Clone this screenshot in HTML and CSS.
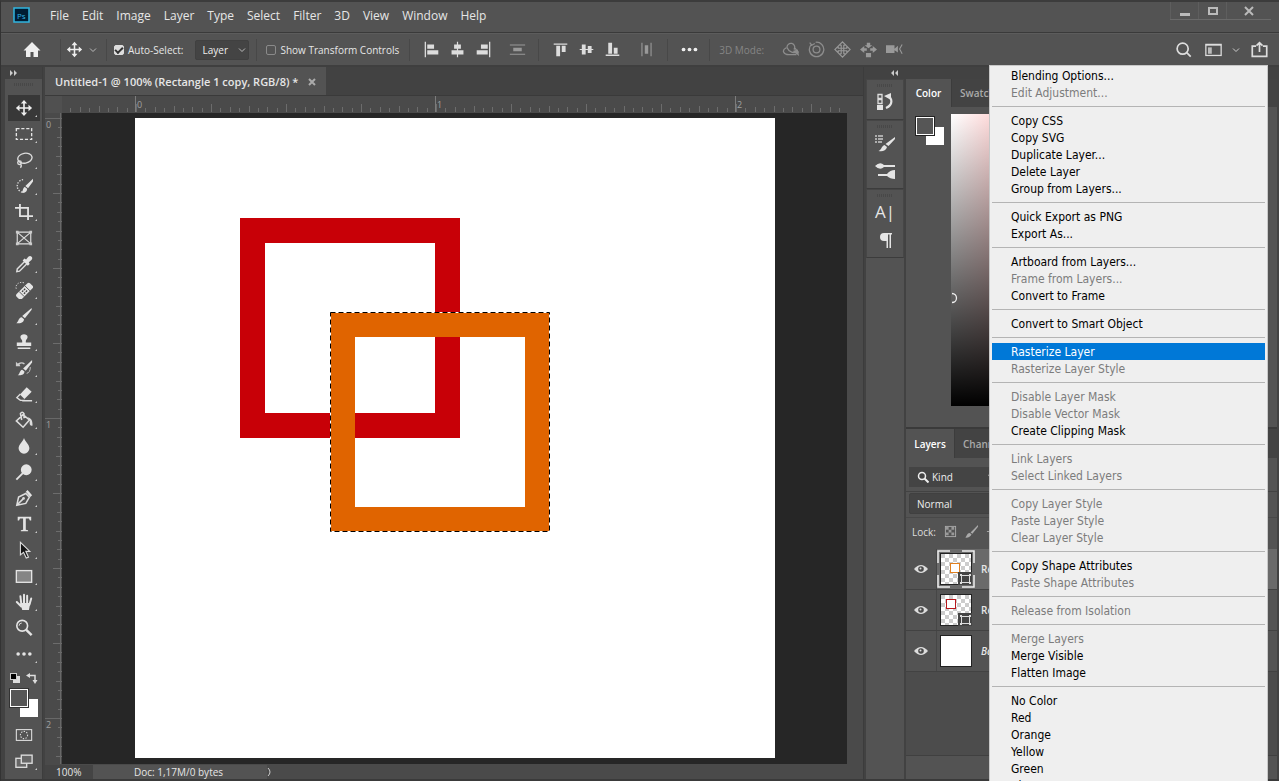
FILE: index.html
```html
<!DOCTYPE html>
<html lang="en">
<head>
<meta charset="utf-8">
<title>Untitled-1 @ 100%</title>
<link rel="stylesheet" href="styles.css">
</head>
<body>
<div class="app">
  <header class="menubar">
    <svg class="logo" viewBox="0 0 17 16"><rect x="1" y="1" width="15" height="14" fill="#001d33" stroke="#31b5e0" stroke-width="1.5"/><text x="4" y="12" class="logo-text">Ps</text></svg>
    <nav class="menus">
      <button>File</button><button>Edit</button><button>Image</button><button>Layer</button><button>Type</button><button>Select</button><button>Filter</button><button>3D</button><button>View</button><button>Window</button><button>Help</button>
    </nav>
    <div class="window-buttons">
      <button aria-label="Minimize"><svg viewBox="0 0 12 12"><path d="M1 9.500h10" stroke="#bbb" stroke-width="3"/></svg></button>
      <button aria-label="Maximize"><svg viewBox="0 0 12 12"><rect x="2" y="3" width="8" height="6" fill="none" stroke="#bbb" stroke-width="2"/></svg></button>
      <button aria-label="Close"><svg viewBox="0 0 12 12"><path d="M2 2l8 8M10 2l-8 8" stroke="#bbb" stroke-width="2"/></svg></button>
    </div>
  </header>

  <div class="options">
    <button class="opt home" aria-label="Home"><svg viewBox="0 0 20 20"><path d="M10 2L1.500 10.500H4V17h4.500v-5h3v5H16v-6.500h2.500z" fill="#eee"/></svg></button>
    <i class="rule"></i>
    <button class="opt" aria-label="Move tool"><svg viewBox="0 0 20 20"><path d="M10 4v12M4 10h12" stroke="#eee" stroke-width="1.800"/><path d="M10 1l3.500 4h-7zM10 19l3.500-4h-7zM1 10l4-3.500v7zM19 10l-4-3.500v7z" fill="#eee"/></svg></button>
    <svg class="chev" viewBox="0 0 8 8"><path d="M1 2.500l3 3 3-3" fill="none" stroke="#bbb"/></svg>
    <i class="rule"></i>
    <label class="check"><input type="checkbox" checked>Auto-Select:</label>
    <div class="layer-pick"><select class="pick" aria-label="Auto-Select target"><option>Layer</option></select><svg class="chev" viewBox="0 0 8 8"><path d="M1 2.500l3 3 3-3" fill="none" stroke="#bbb"/></svg></div>
    <i class="rule spaced"></i>
    <label class="check"><input type="checkbox">Show Transform Controls</label>
    <i class="rule wide"></i>
    <div class="set">
      <button class="opt" aria-label="Align left"><svg viewBox="0 0 20 20" fill="#ddd"><path d="M2 1h1.500v18H2zM5 4h8v5H5zM5 11h13v5H5z"/></svg></button>
      <button class="opt" aria-label="Align center"><svg viewBox="0 0 20 20" fill="#ddd"><path d="M9.300 1h1.400v18H9.300zM6 4h8v5H6zM3 11h14v5H3z"/></svg></button>
      <button class="opt" aria-label="Align right"><svg viewBox="0 0 20 20" fill="#ddd"><path d="M16.500 1H18v18h-1.500zM7 4h8v5H7zM2 11h13v5H2z"/></svg></button>
    </div>
    <button class="opt dist" aria-label="Distribute"><svg viewBox="0 0 20 20" fill="#999"><path d="M1 4h18v1.300H1zM5 8h10v4H5zM1 15h18v1.300H1z"/></svg></button>
    <i class="rule"></i>
    <div class="set">
      <button class="opt" aria-label="Align top"><svg viewBox="0 0 20 20" fill="#ddd"><path d="M2 3h16v1.500H2zM5 5.500h4.500V18H5zM11.500 5.500H16V13h-4.500z"/></svg></button>
      <button class="opt" aria-label="Align middle"><svg viewBox="0 0 20 20" fill="#ddd"><path d="M2 9.300h16v1.400H2zM4.500 4H9v12H4.500zM11.500 6H16v8h-4.500z"/></svg></button>
      <button class="opt" aria-label="Align bottom"><svg viewBox="0 0 20 20" fill="#ddd"><path d="M2 16h16v1.500H2zM5 2h4.500v13H5zM11.500 8H16v7h-4.500z"/></svg></button>
    </div>
    <button class="opt dist" aria-label="Distribute widths"><svg viewBox="0 0 20 20" fill="#999"><path d="M4 2h1.300v16H4zM8 5h4v10H8zM14.700 2H16v16h-1.300z"/></svg></button>
    <i class="rule"></i>
    <button class="opt" aria-label="More"><svg viewBox="0 0 20 20" fill="#eee"><circle cx="3" cy="10" r="2.200"/><circle cx="10" cy="10" r="2.200"/><circle cx="17" cy="10" r="2.200"/></svg></button>
    <i class="rule"></i>
    <span class="mode">3D Mode:</span>
    <div class="set">
      <button class="opt" aria-label="Orbit"><svg viewBox="0 0 20 20" fill="none" stroke="#8d8d8d" stroke-width="1.500"><path d="M5 8c-6 3-3 8 3 8h9M6 8a4.500 4.500 0 1 1 8 2M6 8c2 5 8 7 13 5l-4-5"/><path d="M14 12l5 4-1-5z" fill="#8d8d8d"/></svg></button>
      <button class="opt" aria-label="Roll"><svg viewBox="0 0 20 20" fill="none" stroke="#8d8d8d" stroke-width="1.500"><circle cx="10" cy="10" r="4"/><path d="M4 4a8.500 8.500 0 1 0 5-2.500M2 2l2.500 3L8 3"/></svg></button>
      <button class="opt" aria-label="Pan"><svg viewBox="0 0 20 20" fill="none" stroke="#999" stroke-width="1.300"><path d="M8.500 8.500H5V6l-4 4 4 4v-2.500h10V14l4-4-4-4v2.500h-3.500V5H14l-4-4-4 4h2.500zM8.500 11.500V15H6l4 4 4-4h-2.500v-6.500h-3z"/></svg></button>
      <button class="opt" aria-label="Slide"><svg viewBox="0 0 20 20" fill="#999"><path d="M8 2h4v3h2.500L10 8.500 5.500 5H8zM0 10l5-4v2.500h3v3H5V14zM20 10l-5-4v2.500h-3v3h3V14zM7 14h6v5H7z"/></svg></button>
      <button class="opt" aria-label="Scale"><svg viewBox="0 0 20 20"><path d="M0 5h10v9H0zM10 9l4-3.500v8L10 11z" fill="#999"/><path d="M19 4l-3 5.500 3 5.500" fill="none" stroke="#999" stroke-width="1.300"/></svg></button>
    </div>
    <div class="right-tools">
      <button class="opt" aria-label="Search"><svg viewBox="0 0 20 20" fill="none" stroke="#ddd" stroke-width="2"><circle cx="9" cy="9" r="6.500"/><path d="M13.500 13.500l5 5"/></svg></button>
      <button class="opt" aria-label="Workspace"><svg viewBox="0 0 20 20"><rect x="1" y="4" width="18" height="13" fill="none" stroke="#ddd" stroke-width="1.500"/><path d="M1 4.500h18" stroke="#ddd" stroke-width="2"/><path d="M3.500 7.500H8V15H3.500z" fill="#bbb"/></svg></button>
      <svg class="chev" viewBox="0 0 8 8"><path d="M1 2.500l3 3 3-3" fill="none" stroke="#ccc"/></svg>
      <button class="opt" aria-label="Share"><svg viewBox="0 0 20 20" fill="none" stroke="#ddd" stroke-width="2"><path d="M6 6H1.500v12h17V6H14M10 13V2M6.500 5.500L10 2l3.500 3.500"/></svg></button>
    </div>
  </div>

  <main class="body">
    <aside class="toolbar">
      <div class="collapse"><svg viewBox="0 0 10 8"><path d="M1 1l3 3-3 3zM5 1l3 3-3 3z" fill="#ccc"/></svg></div>
      <div class="grip"></div>
      <button class="tool active" aria-label="Move"><svg viewBox="0 0 20 20"><path d="M10 4v12M4 10h12" stroke="#eee" stroke-width="1.800"/><path d="M10 1l3.500 4h-7zM10 19l3.500-4h-7zM1 10l4-3.500v7zM19 10l-4-3.500v7z" fill="#eee"/></svg></button>
      <button class="tool" aria-label="Marquee"><svg viewBox="0 0 20 20"><rect x="1.500" y="4" width="17" height="12" fill="none" stroke="#e4e4e4" stroke-width="1.500" stroke-dasharray="3.500 2"/></svg></button>
      <button class="tool" aria-label="Lasso"><svg viewBox="0 0 20 20" fill="none" stroke="#ddd" stroke-width="1.500"><ellipse cx="11" cy="8" rx="8" ry="5.500" transform="rotate(-10 11 8)"/><circle cx="5" cy="13" r="2"/><path d="M6 14.500q2 2 0 4"/></svg></button>
      <button class="tool" aria-label="Quick selection"><svg viewBox="0 0 20 20"><path d="M9 3a7 7 0 1 0 1 14" fill="none" stroke="#ddd" stroke-width="1.500" stroke-dasharray="1.500 1.500"/><path d="M20 2v3l-5.500 7.500-3-2.500zM13.500 13c0 4-4 5-6.500 4.500 2-1 1.500-6 4-6.500z" fill="#e4e4e4"/></svg></button>
      <button class="tool" aria-label="Crop"><svg viewBox="0 0 20 20"><path d="M5.500 1v13.500H20M0 5.500h14.500V19" fill="none" stroke="#e4e4e4" stroke-width="2"/></svg></button>
      <button class="tool plain" aria-label="Frame"><svg viewBox="0 0 20 20"><path d="M2.500 3.500h15v13h-15zM3 4l14 12M17 4L3 16" fill="none" stroke="#ddd" stroke-width="1.300"/><path d="M1 2h3v3H1zM16 2h3v3h-3zM1 15h3v3H1zM16 15h3v3h-3z" fill="#ccc"/></svg></button>
      <button class="tool" aria-label="Eyedropper"><svg viewBox="0 0 20 20"><path d="M11 7l-8.500 8.500-.5 3 3-.5L13.500 9.500" fill="none" stroke="#ddd" stroke-width="1.600"/><path d="M8.500 6L10.500 4l1.800 1 2.500-3c2.500-2.500 6 1 3.500 3.500l-3 2.500 1 2-2 2z" fill="#e4e4e4"/></svg></button>
      <button class="tool" aria-label="Healing brush"><svg viewBox="0 0 20 20"><path d="M10 2C4 0-1 5 2 10" fill="none" stroke="#ddd" stroke-dasharray="1.500 1.500"/><g transform="rotate(-45 11 11)"><rect x="0" y="7" width="21" height="8" rx="2" fill="#e4e4e4"/><path d="M6 7v8M15 7v8" stroke="#535353"/><path d="M8 9.500h2M11 9.500h2M8 12.500h2M11 12.500h2" stroke="#444" stroke-width="1.500"/></g></svg></button>
      <button class="tool" aria-label="Brush"><svg viewBox="0 0 20 20"><path d="M18.500 1v2L11 12.500 8 10zM10 13.500c0 4-5.500 5-8.500 4.500 2.500-1 2-6 6-6.500z" fill="#e4e4e4"/></svg></button>
      <button class="tool" aria-label="Stamp"><svg viewBox="0 0 20 20" fill="#e4e4e4"><path d="M8 9c0-2-2-2-2-4.500C6 .5 14 .5 14 4.500 14 7 12 7 12 9v1.500h6v4H2v-4h6zM3 16h14v1.700H3z"/></svg></button>
      <button class="tool" aria-label="History brush"><svg viewBox="0 0 20 20"><path d="M19 1v3l-7 9-3-2.500zM10.500 14c0 4-4.500 4.500-7.500 4 2.500-1 2-5.500 5-6z" fill="#e4e4e4"/><path d="M3 5q5-3 8 0l-1 1q-3-2-5 0l1 2H1V3z" fill="#ccc"/><path d="M13 16q4-1 4-7" fill="none" stroke="#ccc"/></svg></button>
      <button class="tool" aria-label="Eraser"><svg viewBox="0 0 20 20"><path d="M13 2.500l5.500 5-8 8-5-5z" fill="#e4e4e4"/><path d="M6 10l-4 4L6 17h5M8 17.500h11" fill="none" stroke="#ddd" stroke-width="1.500"/></svg></button>
      <button class="tool" aria-label="Paint bucket"><svg viewBox="0 0 20 20"><path d="M9 4l7 6-7 8-7.500-7zM7.500 10L6 3q2-3 4 0v5" fill="none" stroke="#ddd" stroke-width="1.700"/><path d="M14 7c5 1 5.500 5 5.500 9-2 1-4-1-3-5z" fill="#ddd"/></svg></button>
      <button class="tool" aria-label="Blur"><svg viewBox="0 0 20 20"><path d="M10 1c1 4 6 7 6 11.500a6 6 0 0 1-12 0C4 8 9 5 10 1z" fill="#e4e4e4"/></svg></button>
      <button class="tool" aria-label="Dodge"><svg viewBox="0 0 20 20"><circle cx="12.500" cy="7.500" r="6" fill="#e4e4e4"/><path d="M9 11l-7.500 7.500" stroke="#e4e4e4" stroke-width="2"/></svg></button>
      <button class="tool" aria-label="Pen"><svg viewBox="0 0 20 20"><path d="M2 18l2-9 8-4 4 4-4 7zM2 18l7-7" fill="none" stroke="#ddd" stroke-width="1.700"/><circle cx="9.500" cy="10.500" r="1.500" fill="#ddd"/><path d="M12 3l2-2 5 6-2 2z" fill="#e4e4e4"/></svg></button>
      <button class="tool" aria-label="Type"><svg viewBox="0 0 20 20"><path d="M3 2h15v4h-1.500l-1-2H12v12.500l2.500.5v1h-8v-1l2.500-.5V4H5.500l-1 2H3z" fill="#e4e4e4"/></svg></button>
      <button class="tool" aria-label="Path selection"><svg viewBox="0 0 20 20"><path d="M6 1.500v14l3.500-3 3 6.500 2.500-1-3-6.500h4.500z" fill="#151515" stroke="#ddd" stroke-width="1.200"/></svg></button>
      <button class="tool" aria-label="Rectangle"><svg viewBox="0 0 20 20"><rect x="1.500" y="4" width="17" height="13" fill="#858585" stroke="#e4e4e4" stroke-width="1.500"/></svg></button>
      <button class="tool" aria-label="Hand"><svg viewBox="0 0 20 20" fill="none" stroke="#e4e4e4" stroke-width="2.200" stroke-linecap="round"><path d="M7 12L6 3.500M10 11V2M13.500 11V3M16 13l2-7M7 15L2 10"/><path d="M6 11h11l-1.500 8H8z" fill="#e4e4e4" stroke="none"/></svg></button>
      <button class="tool plain" aria-label="Zoom"><svg viewBox="0 0 20 20" fill="none" stroke="#e4e4e4"><circle cx="8" cy="7.500" r="6" stroke-width="1.800"/><path d="M12.500 12l6 6" stroke-width="2.700"/><path d="M4.500 7.500q0-3 3-3"/></svg></button>
      <button class="tool" aria-label="Edit toolbar"><svg viewBox="0 0 20 20" fill="#e4e4e4"><circle cx="3.500" cy="10" r="2"/><circle cx="10" cy="10" r="2"/><circle cx="16.500" cy="10" r="2"/></svg></button>
      <div class="mini">
        <svg viewBox="0 0 12 12"><rect x="4" y="4" width="7" height="7" fill="#ddd"/><rect x="1.500" y="1.500" width="6" height="6" fill="#000" stroke="#ccc"/></svg>
        <svg viewBox="0 0 12 12"><path d="M3 3.500h6V9" fill="none" stroke="#ddd" stroke-width="1.500"/><path d="M0 3.500L4 1v5zM9 12L6.500 8h5z" fill="#ddd"/></svg>
      </div>
      <svg class="swatch" viewBox="0 0 30 30"><rect x="11" y="11" width="18" height="18" fill="#fff"/><rect x="1.500" y="1.500" width="17" height="17" fill="#565656" stroke="#fff"/><rect x=".5" y=".5" width="19" height="19" fill="none" stroke="#333"/></svg>
      <button class="tool plain" aria-label="Quick mask"><svg viewBox="0 0 20 20" fill="none" stroke="#ddd" stroke-width="1.200"><rect x="1.500" y="4" width="17" height="12"/><circle cx="10" cy="10" r="4" stroke-dasharray="1.500 1.500"/></svg></button>
      <button class="tool" aria-label="Screen mode"><svg viewBox="0 0 20 20" fill="#666" stroke="#ddd" stroke-width="1.500"><rect x="1" y="7" width="12" height="10"/><rect x="7" y="3.500" width="12" height="9"/></svg></button>
    </aside>

    <section class="document">
      <div class="tabs"><div class="tab">Untitled-1 @ 100% (Rectangle 1 copy, RGB/8) * <button aria-label="Close tab"><svg viewBox="0 0 8 8"><path d="M1 1l6 6M7 1L1 7" stroke="#aaa" stroke-width="2"/></svg></button></div></div>
      <div class="sheet">
        <div class="corner"></div>
        <svg class="ruler-h">
          <defs><pattern id="th" x="74" y="0" width="75" height="16" patternUnits="userSpaceOnUse"><path d="M.5 8v8M9.500 12v4M19.500 11v5M28.500 12v4M38.500 10v6M47.500 12v4M56.500 11v5M66.500 12v4" stroke="#6c6c6c"/></pattern></defs>
          <rect width="100%" height="16" fill="url(#th)"/>
          <path d="M73.500 0v16M373.500 0v16M673.500 0v16" stroke="#7c7c7c"/>
          <text x="75" y="12">0</text><text x="375" y="12">1</text><text x="675" y="12">2</text>
        </svg>
        <svg class="ruler-v">
          <defs><pattern id="tv" x="0" y="5" width="17" height="75" patternUnits="userSpaceOnUse"><path d="M8 .5h9M13 9.500h4M12 19.500h5M13 28.500h4M11 38.500h6M13 47.500h4M12 56.500h5M13 66.500h4" stroke="#6c6c6c"/></pattern></defs>
          <rect width="17" height="100%" fill="url(#tv)"/>
          <path d="M0 5.500h17M0 305.500h17M0 605.500h17M15.500 0v2000" stroke="#686868"/>
          <text x="1" y="15">0</text><text x="1" y="315">1</text><text x="1" y="615">2</text>
        </svg>
        <div class="pasteboard">
          <svg class="canvas" viewBox="0 0 640 640">
            <rect width="640" height="640" fill="#fff"/>
            <rect x="117.500" y="112.500" width="195" height="195" fill="none" stroke="#c80007" stroke-width="25"/>
            <rect x="208" y="207" width="194" height="194" fill="none" stroke="#e06400" stroke-width="24"/>
            <rect x="195.500" y="194.500" width="219" height="219" fill="none" stroke="#fff"/>
            <rect x="195.500" y="194.500" width="219" height="219" fill="none" stroke="#000" stroke-dasharray="5 3"/>
          </svg>
        </div>
      </div>
      <div class="status"><span class="zoom">100%</span><span class="doc">Doc: 1,17M/0 bytes</span><svg viewBox="0 0 6 10"><path d="M1 1q4 4 0 8" fill="none" stroke="#ccc"/></svg></div>
    </section>

    <aside class="dock">
      <div class="collapse"><svg viewBox="0 0 10 8"><path d="M5 1L2 4l3 3zM9 1L6 4l3 3z" fill="#ccc"/></svg></div>
      <div class="dock-group">
        <button aria-label="History"><svg viewBox="0 0 20 20"><path d="M3 2.500h4v4H3zM3 7.500h4v4H3z" fill="none" stroke="#ddd" stroke-width="1.300"/><path d="M2 13h6v5H2zM9 4l7-3v7z" fill="#e4e4e4"/><path d="M12 4c6 2 6 9-1 12" fill="none" stroke="#e4e4e4" stroke-width="2.200"/></svg></button>
      </div>
      <div class="dock-group">
        <button aria-label="Brushes"><svg viewBox="0 0 20 20"><path d="M0 3h2M3 3h5M0 6h2M3 6h5M0 9h2M3 9h4" stroke="#ccc" stroke-width="1.500"/><path d="M20 4v2l-6.500 7-3-2zM12 14c-1 4-5 5-8.500 4 3-1 3-5 6-6z" fill="#e4e4e4"/></svg></button>
        <button aria-label="Brush settings"><svg viewBox="0 0 20 20" fill="#e4e4e4"><path d="M0 5q5-5 9-1h11v2H9q-4 4-9-1zM3 13h9q3-4 8-4v9q-5 0-8-3H3z"/></svg></button>
      </div>
      <div class="dock-group">
        <button class="char" aria-label="Character">A|</button>
        <button aria-label="Paragraph"><svg viewBox="0 0 20 20" fill="#e4e4e4"><path d="M9 3h8v1.500h-1V18h-1.500V4.500H13V18h-1.500v-7H9a4 4 0 0 1 0-8z"/></svg></button>
      </div>
      <div class="dock-rest"></div>
    </aside>

    <aside class="panels">
      <div class="collapse"></div>
      <div class="panel-tabs"><button class="on">Color</button><button>Swatches</button></div>
      <div class="color-panel">
        <svg class="swatch" viewBox="0 0 30 30"><rect x="11" y="11" width="18" height="18" fill="#fff"/><rect x="1.500" y="1.500" width="17" height="17" fill="#565656" stroke="#fff"/><rect x=".5" y=".5" width="19" height="19" fill="none" stroke="#222"/></svg>
        <div class="field"><svg class="marker" viewBox="0 0 8 12"><path d="M1 1.500a4.500 4.500 0 0 1 0 9" fill="none" stroke="#eee" stroke-width="1.300"/></svg></div>
      </div>
      <div class="panel-tabs second"><button class="on">Layers</button><button>Channels</button></div>
      <div class="filter-row"><div class="kind"><svg viewBox="0 0 12 12"><circle cx="5" cy="5" r="3.500" fill="none" stroke="#eee" stroke-width="1.500"/><path d="M7.500 7.500l4 4" stroke="#eee" stroke-width="2"/></svg><select class="pick" aria-label="Filter kind"><option>Kind</option></select><svg class="chev" viewBox="0 0 8 8"><path d="M1 2.500l3 3 3-3" fill="none" stroke="#aaa"/></svg></div></div>
      <div class="blend-row"><select class="pick" aria-label="Blend mode"><option>Normal</option></select></div>
      <div class="lock-row"><span>Lock:</span>
        <svg viewBox="0 0 14 14"><rect x="1.500" y="1.500" width="11" height="11" fill="none" stroke="#aaa"/><path d="M2 2h3v3H2zM8 2h3v3H8zM5 5h3v3H5zM2 8h3v3H2zM8 8h3v3H8z" fill="#999"/></svg>
        <svg viewBox="0 0 14 14"><path d="M14 0v2L8 9.500 6 8zM7 10C6 13 3 14 0 13.500c2-1 2-5 5-5z" fill="#aaa"/></svg>
        <svg viewBox="0 0 14 14"><path d="M7 1v12M1 7h12" stroke="#aaa"/></svg>
      </div>
      <div class="layers">
        <div class="row selected"><button class="eye" aria-label="Visibility"><svg viewBox="0 0 14 10"><path d="M0 5q7-8 14 0-7 8-14 0z" fill="#ddd"/><circle cx="7" cy="5" r="2.800" fill="#4a4a4a"/><circle cx="6.500" cy="4.500" r="1" fill="#ddd"/></svg></button>
          <svg class="thumb" viewBox="0 0 38 38"><defs><pattern id="ck" width="8" height="8" patternUnits="userSpaceOnUse" x="4" y="4"><path d="M0 0h8v8H0z" fill="#fff"/><path d="M0 0h4v4H0zM4 4h4v4H4z" fill="#ccc"/></pattern></defs><path d="M1 13V1h12M25 1h12v12M37 25v12H25M13 37H1V25" fill="none" stroke="#eee" stroke-width="1.500"/><rect x="3.500" y="3.500" width="31" height="31" fill="url(#ck)" stroke="#222"/><rect x="13.500" y="13.500" width="9" height="9" fill="#fff" stroke="#e08020"/><path d="M21 22h14v13H21z" fill="#444"/><rect x="24.500" y="25.500" width="8" height="7" fill="none" stroke="#ddd"/><path d="M23 24h2v2h-2zM32 24h2v2h-2zM23 32h2v2h-2zM32 32h2v2h-2z" fill="#ddd"/></svg>
          <span>Rectangle 1 copy</span></div>
        <div class="row"><button class="eye" aria-label="Visibility"><svg viewBox="0 0 14 10"><path d="M0 5q7-8 14 0-7 8-14 0z" fill="#ddd"/><circle cx="7" cy="5" r="2.800" fill="#4a4a4a"/><circle cx="6.500" cy="4.500" r="1" fill="#ddd"/></svg></button>
          <svg class="thumb" viewBox="0 0 38 38"><rect x="3.500" y="3.500" width="31" height="31" fill="url(#ck)" stroke="#222"/><rect x="9.500" y="8.500" width="9" height="9" fill="#fff" stroke="#b8171c"/><path d="M21 22h14v13H21z" fill="#444"/><rect x="24.500" y="25.500" width="8" height="7" fill="none" stroke="#ddd"/><path d="M23 24h2v2h-2zM32 24h2v2h-2zM23 32h2v2h-2zM32 32h2v2h-2z" fill="#ddd"/></svg>
          <span>Rectangle 1</span></div>
        <div class="row"><button class="eye" aria-label="Visibility"><svg viewBox="0 0 14 10"><path d="M0 5q7-8 14 0-7 8-14 0z" fill="#ddd"/><circle cx="7" cy="5" r="2.800" fill="#4a4a4a"/><circle cx="6.500" cy="4.500" r="1" fill="#ddd"/></svg></button>
          <svg class="thumb" viewBox="0 0 38 38"><rect x="3.500" y="3.500" width="31" height="31" fill="#fff" stroke="#222"/></svg>
          <em>Background</em></div>
      </div>
      <div class="panel-foot"></div>
    </aside>
  </main>

  <div class="context" role="menu">
    <div class="block"><button>Blending Options...</button><button disabled>Edit Adjustment...</button></div>
    <div class="block"><button>Copy CSS</button><button>Copy SVG</button><button>Duplicate Layer...</button><button>Delete Layer</button><button>Group from Layers...</button></div>
    <div class="block"><button>Quick Export as PNG</button><button>Export As...</button></div>
    <div class="block"><button>Artboard from Layers...</button><button disabled>Frame from Layers...</button><button>Convert to Frame</button></div>
    <div class="block"><button>Convert to Smart Object</button></div>
    <div class="block"><button class="hot">Rasterize Layer</button><button disabled>Rasterize Layer Style</button></div>
    <div class="block"><button disabled>Disable Layer Mask</button><button disabled>Disable Vector Mask</button><button>Create Clipping Mask</button></div>
    <div class="block"><button disabled>Link Layers</button><button disabled>Select Linked Layers</button></div>
    <div class="block"><button disabled>Copy Layer Style</button><button disabled>Paste Layer Style</button><button disabled>Clear Layer Style</button></div>
    <div class="block"><button>Copy Shape Attributes</button><button disabled>Paste Shape Attributes</button></div>
    <div class="block"><button disabled>Release from Isolation</button></div>
    <div class="block"><button disabled>Merge Layers</button><button>Merge Visible</button><button>Flatten Image</button></div>
    <div class="block"><button>No Color</button><button>Red</button><button>Orange</button><button>Yellow</button><button>Green</button><button>Blue</button></div>
  </div>
</div>
</body>
</html>
```
FILE: styles.css
```css
* { box-sizing: border-box; }
body { margin: 0; background: #535353; color: #e6e6e6; font: 10px/14px "Open Sans", "Noto Sans", sans-serif; }
button { margin: 0; padding: 0; border: 0; background: none; color: inherit; font: inherit; }
svg { display: block; flex: none; }

.app { position: relative; display: flex; flex-direction: column; height: 100vh; overflow: hidden; border-top: 2px solid #3c3c3c; border-left: 1px solid #333; }

.menubar { display: flex; flex: none; height: 31px; padding-left: 12px; border-bottom: 1px solid #3a3a3a; }
.logo { width: 17px; height: 16px; margin-top: 5px; }
.logo-text { fill: #31b5e0; font: 8px "Open Sans", sans-serif; }
.menus { display: flex; align-items: center; gap: 13px; padding: 0 0 2px 20px; font-size: 12px; }
.window-buttons { display: flex; height: 18px; margin-left: auto; margin-right: 8px; border-bottom: 1px solid #6a6a6a; }
.window-buttons button { width: 28px; display: grid; place-items: center; border-left: 1px solid #5e5e5e; }
.window-buttons button:last-child { width: 45px; }
.window-buttons svg { width: 12px; height: 12px; }

.options { display: flex; flex: none; align-items: center; height: 34px; padding-left: 11px; border-top: 1px solid #5c5c5c; border-bottom: 2px solid #3f3f3f; }
.opt { display: grid; place-items: center; width: 26px; height: 26px; flex: none; }
.opt svg { width: 17px; height: 17px; }
.home { width: 40px; }
.home svg { width: 20px; height: 20px; }
.rule { width: 1px; height: 22px; margin: 0 7px; background: #484848; flex: none; }
.home + .rule { margin: 0 0 0 8px; }
.rule.spaced { margin: 0 9px 0 7px; }
.rule.wide { margin: 0 8px 0 10px; }
.chev { width: 8px; height: 8px; margin: 0 2px; }
.check { display: flex; align-items: center; gap: 4px; white-space: nowrap; }
.check input { appearance: none; width: 10px; height: 10px; margin: 0; border: 1px solid #8a8a8a; border-radius: 2px; }
.check input:checked { display: grid; place-items: center; border-color: #ddd; background: #ddd; }
.check input:checked::after { content: ""; width: 6px; height: 3px; border-left: 2px solid #333; border-bottom: 2px solid #333; transform: rotate(-45deg); }
.pick { appearance: none; height: 20px; padding: 0 7px; border: 1px solid #404040; border-radius: 2px; background: #444; color: #eee; font: inherit; }
.layer-pick { display: flex; align-items: center; width: 54px; height: 20px; margin-left: 12px; border: 1px solid #404040; border-radius: 2px; background: #444; }
.layer-pick .pick { width: 40px; height: 18px; padding: 0 0 0 6px; border: 0; background: none; }
.set { display: flex; }
.dist { margin-left: 8px; }
.dist + .rule { margin: 0 8px; }
.mode { margin: 0 13px 0 2px; color: #858585; white-space: nowrap; }
.right-tools { display: flex; align-items: center; margin-left: auto; margin-right: 5px; }
.right-tools .opt { width: 30px; }
.right-tools .chev { margin: 0 4px; }

.body { display: flex; flex: 1; min-height: 0; background: #424242; border-bottom: 2px solid #3a3a3a; }
.collapse { display: flex; align-items: center; flex: none; height: 12px; background: #424242; }
.collapse svg { width: 10px; height: 8px; }

.toolbar { display: flex; flex-direction: column; align-items: center; width: 38px; margin-left: 4px; margin-right: 2px; background: #535353; border-right: 1px solid #3d3d3d; }
.toolbar .collapse { width: 100%; padding-left: 4px; }
.grip { flex: none; height: 16px; width: 20px; background: repeating-linear-gradient(90deg, #484848 0 1px, transparent 1px 2px) no-repeat center 4px / 20px 3px; }
.tool { position: relative; display: grid; place-items: center; flex: none; width: 32px; height: 26px; }
.tool svg { width: 18px; height: 18px; }
.tool.active { background: #383838; }
.tool::after { content: ""; position: absolute; right: 3px; bottom: 4px; border: 1px solid #ccc; border-left-color: transparent; border-top-color: transparent; }
.tool.plain::after { display: none; }
.mini { display: flex; gap: 5px; height: 21px; align-items: center; }
.mini svg { width: 12px; height: 12px; }
.swatch { width: 30px; height: 30px; }
.toolbar .swatch { margin-bottom: 4px; }

.document { display: flex; flex-direction: column; flex: 1; min-width: 0; border-right: 1px solid #3c3c3c; }
.tabs { display: flex; flex: none; height: 29px; border-bottom: 1px solid #3a3a3a; }
.tab { display: flex; align-items: center; gap: 10px; padding: 1px 10px 0; background: #535353; font-size: 11px; font-weight: 600; white-space: nowrap; }
.tab svg { width: 8px; height: 8px; }
.sheet { flex: 1; min-height: 0; display: grid; grid-template: 17px 1fr / 17px 1fr; padding-right: 16px; background: #4a4a4a; }
.corner { background: #505050; }
.ruler-h { width: 100%; height: 17px; }
.ruler-v { width: 17px; height: 100%; }
.sheet text { fill: #a0a0a0; font: 9px "Open Sans", sans-serif; }
.pasteboard { min-width: 0; min-height: 0; overflow: hidden; padding: 5px 0 0 73px; background: #262626; }
.canvas { width: 640px; height: 640px; }
.status { display: flex; align-items: center; flex: none; height: 15px; background: #4a4a4a; color: #e6e6e6; }
.zoom { width: 48px; padding-left: 11px; background: #444; }
.doc { width: 174px; padding-left: 41px; background: #535353; }
.status svg { width: 6px; height: 10px; }

.dock { display: flex; flex-direction: column; width: 38px; margin-left: 2px; margin-right: 2px; flex: none; }
.dock .collapse { justify-content: flex-end; padding-right: 5px; }
.dock-group { display: flex; flex-direction: column; align-items: center; flex: none; padding: 8px 0 3px; border: 1px solid #464646; border-bottom-color: #3c3c3c; background: #535353 repeating-linear-gradient(90deg, #484848 0 1px, transparent 1px 2px) no-repeat center 4px / 16px 3px; }
.dock-group button { display: grid; place-items: center; width: 34px; height: 28px; }
.dock-group svg { width: 20px; height: 20px; }
.dock-group .char { font-size: 17px; line-height: 24px; }
.dock-rest { flex: 1; background: #535353; }

.panels { display: flex; flex-direction: column; width: 371px; margin-right: 2px; flex: none; background: #535353; }
.panel-tabs { display: flex; flex: none; height: 28px; background: #434343; color: #aaa; font-weight: 600; }
.panel-tabs button { padding: 0 8px; border-right: 1px solid #3c3c3c; }
.panel-tabs .on { width: 46px; background: #535353; color: #fff; }
.color-panel { display: flex; flex: none; height: 320px; padding: 7px 12px 21px 9px; gap: 6px; }
.color-panel .swatch { margin-top: 2px; }
.field { flex: 1; background: linear-gradient(to top, #000, transparent), linear-gradient(to right, #fff, #f00 280px); }
.marker { width: 8px; height: 12px; margin-top: 178px; }
.second { height: 31px; border-top: 2px solid #3a3a3a; }
.second .on { width: 49px; }
.filter-row { flex: none; height: 34px; padding: 9px 0 0 3px; border-bottom: 1px solid #424242; }
.kind { display: flex; align-items: center; width: 92px; height: 20px; padding-left: 8px; background: #444; }
.kind svg { width: 12px; height: 12px; }
.kind .pick { width: 56px; height: 18px; padding: 0 3px; border: 0; background: none; }
.blend-row { flex: none; height: 25px; padding: 1px 0 0 3px; }
.blend-row .pick { width: 150px; height: 21px; }
.lock-row { display: flex; align-items: center; gap: 8px; flex: none; height: 32px; padding: 0 0 4px 6px; border-top: 1px solid #484848; color: #ddd; }
.lock-row svg { width: 13px; height: 13px; }
.layers { flex: 1; min-height: 0; background: #4c4c4c; }
.row { display: flex; align-items: center; height: 41px; border-bottom: 1px solid #424242; background: #535353; }
.row.selected { background: linear-gradient(#535353, #535353) no-repeat 0 0 / 30px 100%, #6a6a6a; }
.row span, .row em { padding-left: 6px; font-weight: 600; }
.eye { display: grid; place-items: center; width: 31px; height: 100%; border-right: 1px solid #464646; }
.eye svg { width: 14px; height: 10px; }
.thumb { width: 38px; height: 38px; }
.panel-foot { flex: none; height: 24px; border-top: 1px solid #404040; }

.context { position: absolute; top: 63px; right: 11px; bottom: 0; width: 279px; overflow: hidden; padding: 1px 2px 0; background: #efefef; border: 1px solid #c8c8c8; border-bottom: 0; color: #000; font: 12px/17px "DejaVu Sans Condensed", "DejaVu Sans", sans-serif; }
.block + .block { margin-top: 5px; padding-top: 5px; border-top: 1px solid #b4b4b4; }
.block button { display: block; width: 100%; height: 17px; padding: 1px 0 0 19px; line-height: 16px; text-align: left; }
.block button:disabled { color: #7c7c7c; }
.block .hot { background: #0078d7; color: #fff; }
```
